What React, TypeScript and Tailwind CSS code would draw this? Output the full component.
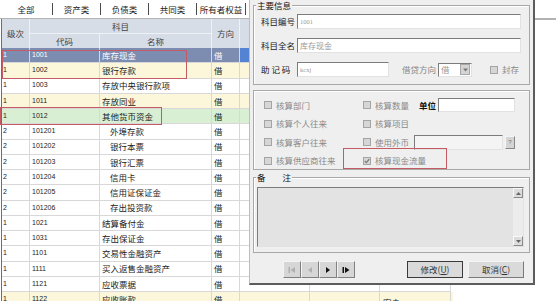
import React from 'react'

type Tone = 'sel' | 'yellow' | 'green' | 'none'
type Row = { lv: string; code: string; name: string; dir: string; tone: Tone; sub?: boolean; extra?: string }

const rows: Row[] = [
  { lv: '1', code: '1001', name: '库存现金', dir: '借', tone: 'sel' },
  { lv: '1', code: '1002', name: '银行存款', dir: '借', tone: 'yellow' },
  { lv: '1', code: '1003', name: '存放中央银行款项', dir: '借', tone: 'none' },
  { lv: '1', code: '1011', name: '存放同业', dir: '借', tone: 'yellow' },
  { lv: '1', code: '1012', name: '其他货币资金', dir: '借', tone: 'green' },
  { lv: '2', code: '101201', name: '外埠存款', dir: '借', tone: 'none', sub: true },
  { lv: '2', code: '101202', name: '银行本票', dir: '借', tone: 'none', sub: true },
  { lv: '2', code: '101203', name: '银行汇票', dir: '借', tone: 'none', sub: true },
  { lv: '2', code: '101204', name: '信用卡', dir: '借', tone: 'none', sub: true },
  { lv: '2', code: '101205', name: '信用证保证金', dir: '借', tone: 'none', sub: true },
  { lv: '2', code: '101206', name: '存出投资款', dir: '借', tone: 'none', sub: true },
  { lv: '1', code: '1021', name: '结算备付金', dir: '借', tone: 'none' },
  { lv: '1', code: '1031', name: '存出保证金', dir: '借', tone: 'none' },
  { lv: '1', code: '1101', name: '交易性金融资产', dir: '借', tone: 'none' },
  { lv: '1', code: '1111', name: '买入返售金融资产', dir: '借', tone: 'none' },
  { lv: '1', code: '1121', name: '应收票据', dir: '借', tone: 'none' },
  { lv: '1', code: '1122', name: '应收账款', dir: '借', tone: 'yellow', extra: '客户' },
]

const toneBg: Record<Tone, string> = {
  sel: 'bg-[#7d8db1] text-white',
  yellow: 'bg-[#fcf7da] text-[#222]',
  green: 'bg-[#d8efd4] text-[#222]',
  none: 'bg-white text-[#222]',
}

const tabs = [
  { t: '全部', w: 'w-[52px]' },
  { t: '资产类', w: 'w-[47px]' },
  { t: '负债类', w: 'w-[47px]' },
  { t: '共同类', w: 'w-[47px]' },
  { t: '所有者权益', w: 'w-[48px]' },
]

const cols = 'grid grid-cols-[28px_70px_112px_28px_70px_70px_71px]'
const cell = 'border-r border-b border-[#d8d8d8] flex items-center overflow-hidden whitespace-nowrap'
const num = "font-['Liberation_Sans',sans-serif] text-[7px]"
const sunken = 'border border-t-[#7c7c7c] border-l-[#7c7c7c] border-r-[#e2e2e2] border-b-[#e2e2e2]'

function Check({ checked }: { checked?: boolean }) {
  return (
    <span className="w-[8px] h-[8px] border border-[#a4a4a4] bg-[#d6d6d6] flex items-center justify-center shrink-0">
      {checked && (
        <svg width="6" height="6" viewBox="0 0 6 6">
          <path d="M0.8 3 L2.4 4.6 L5.3 1.2" fill="none" stroke="#777" strokeWidth="1.2" />
        </svg>
      )}
    </span>
  )
}

function Group({ label, className, children }: { label?: React.ReactNode; className: string; children?: React.ReactNode }) {
  return (
    <div className={`relative ml-[3px] w-[277px] border border-[#a8a8a8] shadow-[inset_1px_1px_0_#fff] ${className}`}>
      {label && (
        <span className="absolute -top-[7px] left-[2px] bg-[#efefef] px-[1px] text-[8.5px] leading-[12px] text-[#111] flex">
          {label}
        </span>
      )}
      {children}
    </div>
  )
}

function NavBtn({ kind, off }: { kind: 'first' | 'prev' | 'next' | 'last'; off?: boolean }) {
  const c = off ? '#b0b0b0' : '#111'
  return (
    <div className="w-[18px] h-[17px] bg-[#d6d6d6] border border-t-[#f4f4f4] border-l-[#f4f4f4] border-r-[#808080] border-b-[#808080] flex items-center justify-center">
      <svg width="8" height="8" viewBox="0 0 8 8">
        {kind === 'first' && (
          <>
            <rect x="0.5" y="1" width="1.5" height="6" fill={c} />
            <path d="M7 1 L2.5 4 L7 7 Z" fill={c} />
          </>
        )}
        {kind === 'prev' && <path d="M6 1 L2 4 L6 7 Z" fill={c} />}
        {kind === 'next' && <path d="M2 1 L6 4 L2 7 Z" fill={c} />}
        {kind === 'last' && (
          <>
            <rect x="0.5" y="1" width="1.5" height="6" fill={c} />
            <path d="M3 1 L7.5 4 L3 7 Z" fill={c} />
          </>
        )}
      </svg>
    </div>
  )
}

export default function App() {
  return (
    <div className="relative w-[556px] h-[301px] overflow-hidden bg-white font-['Noto_Sans_CJK_SC',sans-serif] text-[8.5px] text-[#222]">
      {/* tabs */}
      <div className="flex h-[19px] items-center border-b border-[#b2b2b2]">
        {tabs.map((tab) => (
          <div key={tab.t} className="flex items-center h-full">
            <div className={`${tab.w} text-center leading-none`}>{tab.t}</div>
            <div className="w-px h-[12px] bg-[#4a4a4a]" />
          </div>
        ))}
      </div>

      {/* grid */}
      <div className="ml-[1px] w-[452px] border-l border-[#6e6e6e]">
        <div className={`${cols} grid-rows-[15px_14px] h-[29px] bg-[#d7dde7] text-[#444]`}>
          <div className="row-span-2 flex items-center justify-center border-r border-[#eef1f5]">级次</div>
          <div className="col-span-2 flex items-center justify-center border-r border-b border-[#eef1f5]">科目</div>
          <div className="row-span-2 flex items-center justify-center border-r border-[#eef1f5]">方向</div>
          <div className="row-span-2 border-r border-[#eef1f5]" />
          <div className="row-span-2 border-r border-[#eef1f5]" />
          <div className="row-span-2" />
          <div className="flex items-center justify-center border-r border-[#eef1f5]">代码</div>
          <div className="flex items-center justify-center border-r border-[#eef1f5]">名称</div>
        </div>
        {rows.map((r) => (
          <div key={r.code} className={`${cols} h-[15.27px] ${toneBg[r.tone]}`}>
            <div className={`${cell} ${num} pl-[1px]`}>{r.lv}</div>
            <div className={`${cell} ${num} pl-[2px]`}>{r.code}</div>
            <div className={`${cell} ${r.sub ? 'pl-[10px]' : 'pl-[2px]'}`}>{r.name}</div>
            <div className={`${cell} pl-[2px]`}>{r.dir}</div>
            <div className={`${cell} ${r.tone === 'sel' ? 'bg-[#5583d4]' : ''}`} />
            <div className={cell} />
            <div className={`${cell} pl-[3px] items-start pt-[4px]`}>{r.extra}</div>
          </div>
        ))}
      </div>
      <div className="absolute left-[452px] right-0 top-[19px] h-px bg-[#b2b2b2]" />

      {/* dialog */}
      <div className="absolute left-[249px] top-0 w-[286px] h-[285px] bg-[#efefef] border-l border-[#bdbdbd] border-r-2 border-b-2 border-r-[#5c5c5c] border-b-[#5c5c5c] flex flex-col">
        <Group label="主要信息" className="mt-[5px] h-[80px] pt-[8px] pl-[7px] flex flex-col gap-[9px]">
          <div className="flex items-center h-[15px]">
            <span className="w-[36px]">科目编号</span>
            <div className={`w-[224px] h-[15px] bg-white ${sunken} flex items-center pl-[2px] text-[6.5px] text-[#9a9a9a] font-['Liberation_Serif',serif]`}>1001</div>
          </div>
          <div className="flex items-center h-[15px]">
            <span className="w-[36px]">科目全名</span>
            <div className={`w-[224px] h-[15px] bg-white ${sunken} flex items-center pl-[2px] text-[8px] text-[#9a9a9a]`}>库存现金</div>
          </div>
          <div className="flex items-center h-[15px]">
            <span className="w-[36px] whitespace-pre">助 记 码</span>
            <div className={`w-[92px] h-[15px] bg-white ${sunken} flex items-center pl-[2px] text-[6.5px] text-[#9a9a9a] font-['Liberation_Serif',serif]`}>kcxj</div>
            <span className="ml-[13px] w-[36px] text-[#888]">借贷方向</span>
            <div className={`w-[34px] h-[14px] bg-white ${sunken} flex items-center`}>
              <span className="flex-1 pl-[2px] text-[#999]">借</span>
              <span className="w-[10px] h-[11px] mr-[1px] bg-[#d4d4d4] border border-[#a8a8a8] flex items-center justify-center">
                <svg width="5" height="4" viewBox="0 0 5 4"><path d="M0 0.5 L5 0.5 L2.5 3.5 Z" fill="#777" /></svg>
              </span>
            </div>
            <span className="ml-[18px]"><Check /></span>
            <span className="ml-[4px] text-[#888]">封存</span>
          </div>
        </Group>

        <Group className="mt-[5px] h-[80px] pt-[7px] pl-[10px] flex flex-col gap-[4.5px] text-[#8a8a8a]">
          <div className="flex items-center h-[14px]">
            <div className="w-[99px] flex items-center gap-[4px]"><Check /><span>核算部门</span></div>
            <div className="w-[56px] flex items-center gap-[4px]"><Check /><span>核算数量</span></div>
            <span className="w-[19px] font-bold text-[#111]">单位</span>
            <div className={`w-[77px] h-[14px] bg-white ${sunken}`} />
          </div>
          <div className="flex items-center h-[14px]">
            <div className="w-[99px] flex items-center gap-[4px]"><Check /><span>核算个人往来</span></div>
            <div className="flex items-center gap-[4px]"><Check /><span>核算项目</span></div>
          </div>
          <div className="flex items-center h-[14px]">
            <div className="w-[99px] flex items-center gap-[4px]"><Check /><span>核算客户往来</span></div>
            <div className="w-[51px] flex items-center gap-[4px]"><Check /><span>使用外币</span></div>
            <div className={`w-[89px] h-[15px] bg-[#f4f4f4] ${sunken}`} />
            <div className="ml-[2px] w-[10px] h-[13px] bg-[#d4d4d4] border border-t-[#f4f4f4] border-l-[#f4f4f4] border-r-[#888] border-b-[#888] flex items-center justify-center text-[6px] text-[#777] font-['Liberation_Sans',sans-serif]">?</div>
          </div>
          <div className="flex items-center h-[14px]">
            <div className="w-[99px] flex items-center gap-[4px]"><Check /><span>核算供应商往来</span></div>
            <div className="flex items-center gap-[4px]"><Check checked /><span>核算现金流量</span></div>
          </div>
        </Group>

        <Group
          label={
            <>
              <span>备</span>
              <span className="ml-[17px]">注</span>
            </>
          }
          className="mt-[7px] h-[76px] pt-[9px] pl-[3px]"
        >
          <div className={`w-[267px] h-[60px] bg-[#e3e3e3] ${sunken} flex justify-end`}>
            <div className="w-[10px] h-full bg-[#ececec] flex flex-col justify-between">
              <div className="h-[10px] bg-[#dcdcdc] border border-t-[#fafafa] border-l-[#fafafa] border-r-[#8a8a8a] border-b-[#8a8a8a] flex items-center justify-center">
                <svg width="5" height="3" viewBox="0 0 5 3"><path d="M0 3 L5 3 L2.5 0 Z" fill="#666" /></svg>
              </div>
              <div className="h-[10px] bg-[#dcdcdc] border border-t-[#fafafa] border-l-[#fafafa] border-r-[#8a8a8a] border-b-[#8a8a8a] flex items-center justify-center">
                <svg width="5" height="3" viewBox="0 0 5 3"><path d="M0 0 L5 0 L2.5 3 Z" fill="#666" /></svg>
              </div>
            </div>
          </div>
        </Group>

        <div className="mt-[8px] flex items-center h-[17px]">
          <div className="ml-[33px] flex">
            <NavBtn kind="first" off />
            <NavBtn kind="prev" off />
            <NavBtn kind="next" />
            <NavBtn kind="last" />
          </div>
          <div className="ml-[52px] w-[56px] h-[17px] bg-[#dadada] border border-[#3a3a3a] flex items-center justify-center text-[#333]">
            修改(<span className="underline">U</span>)
          </div>
          <div className="ml-[5px] w-[56px] h-[17px] bg-[#dadada] border border-t-[#f4f4f4] border-l-[#f4f4f4] border-r-[#7a7a7a] border-b-[#7a7a7a] flex items-center justify-center text-[#333]">
            取消(<span className="underline">C</span>)
          </div>
        </div>
      </div>

      {/* red annotation boxes */}
      <div className="absolute left-[2px] top-[50px] w-[185px] h-[29px] border border-[#c45a64]" />
      <div className="absolute left-0 top-[107px] w-[162px] h-[18px] border border-[#c45a64]" />
      <div className="absolute left-[343px] top-[148px] w-[104px] h-[21px] border border-[#c45a64]" />
    </div>
  )
}
